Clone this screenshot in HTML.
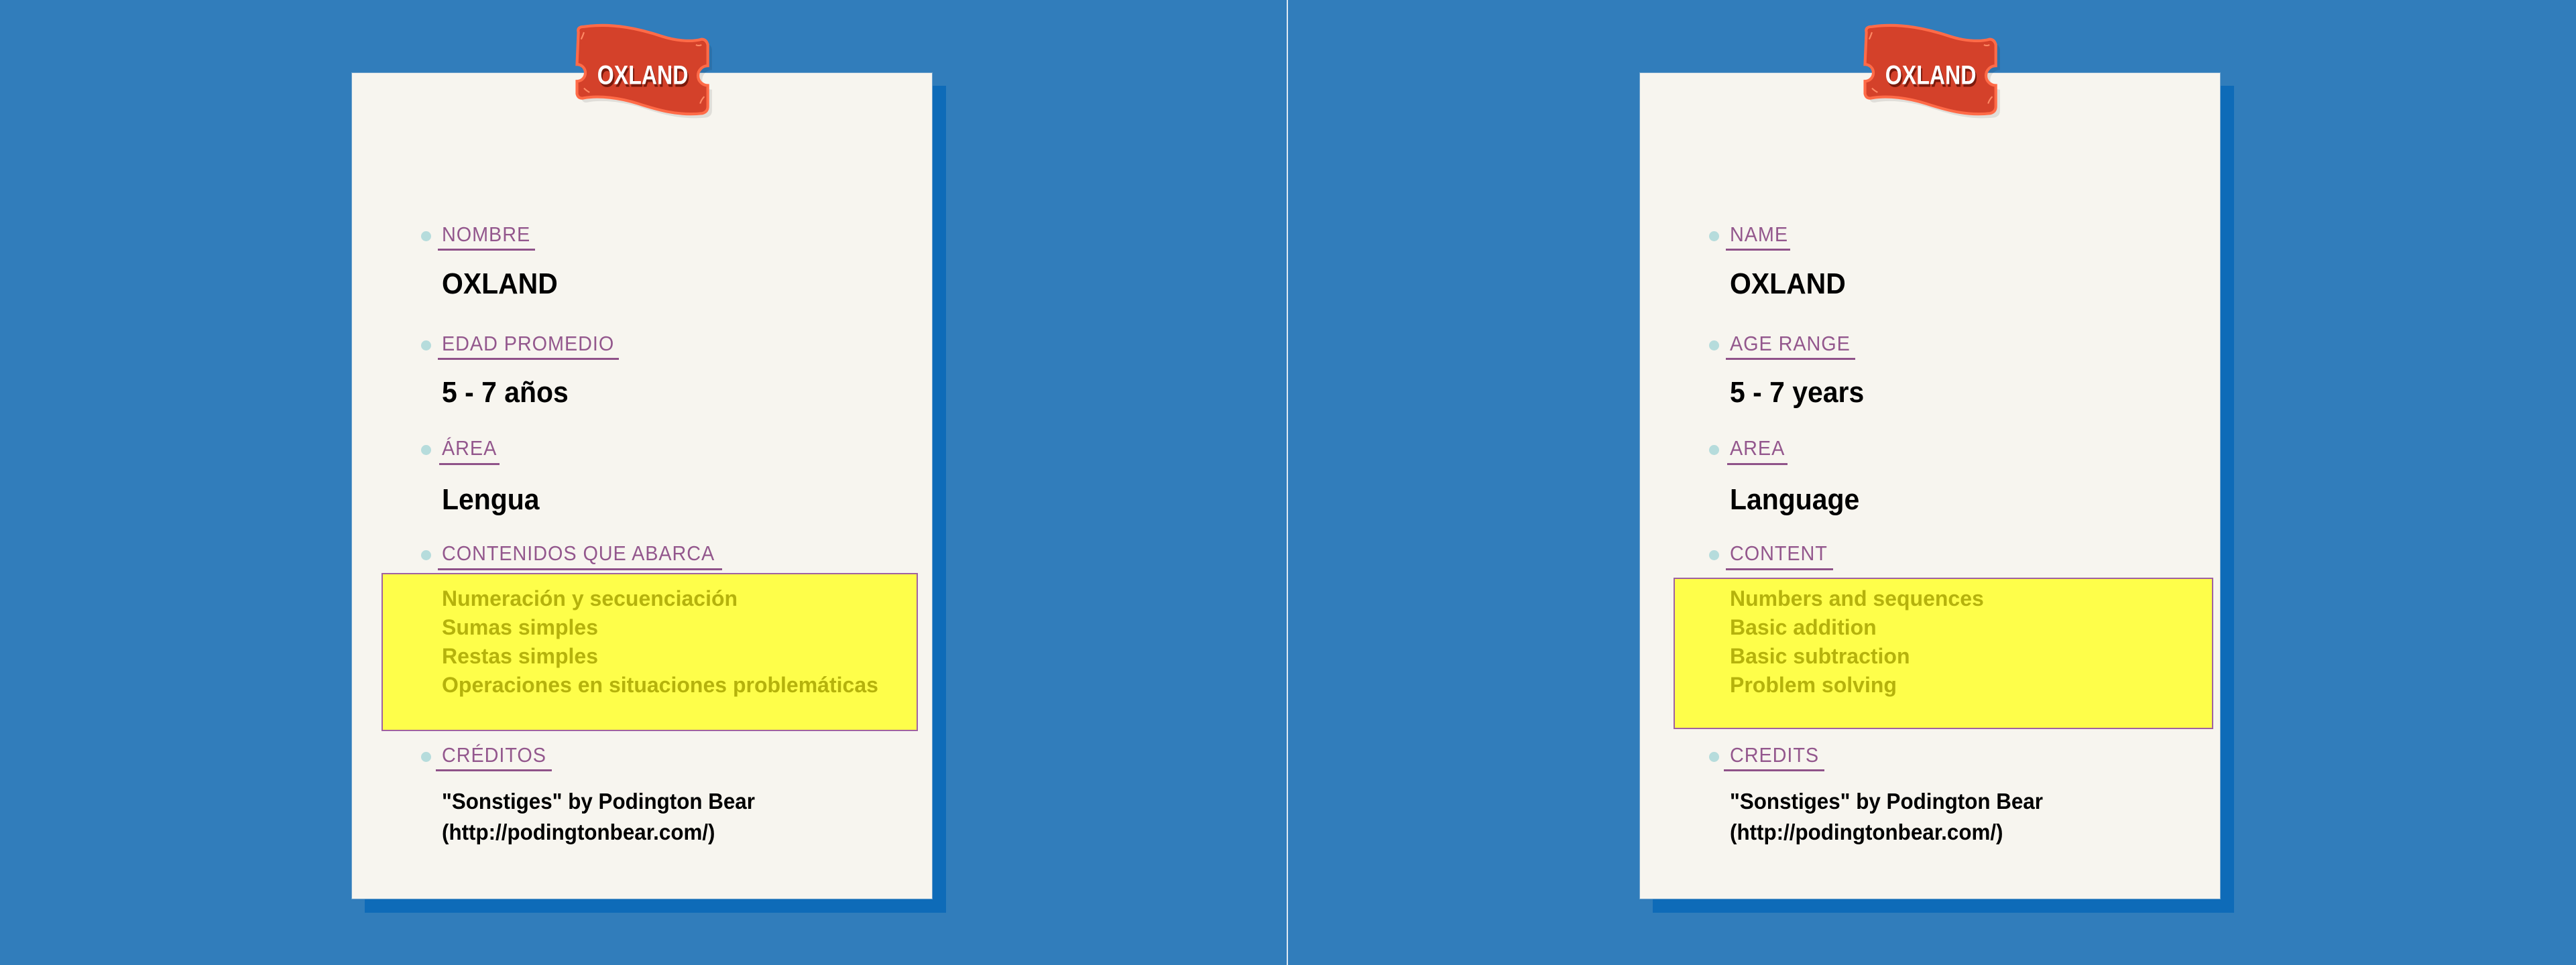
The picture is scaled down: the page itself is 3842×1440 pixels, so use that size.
<!DOCTYPE html>
<html><head><meta charset="utf-8">
<style>
*{margin:0;padding:0;box-sizing:border-box}
body{width:3842px;height:1440px;background:#317dbb;position:relative;overflow:hidden;font-family:"Liberation Sans",sans-serif}
.div{position:absolute;left:1919px;top:0;width:2px;height:1440px;background:#dfe9f2}
.panel{position:absolute;top:0;width:1921px;height:1440px}
.shadow{position:absolute;left:544px;top:128px;width:867px;height:1234px;background:#0e6bb8}
.card{position:absolute;left:524px;top:108px;width:867px;height:1234px;background:#f7f5ef;border:1px solid #6fa2cc}
.t{position:absolute;white-space:nowrap;line-height:1;transform-origin:0 0}
.lab{font-size:31px;color:#93578d;letter-spacing:1px;transform:scaleX(0.93)}
.ul{position:absolute;height:3px;background:#8f5289}
.dot{position:absolute;width:15px;height:15px;border-radius:50%;background:#b6dcdc}
.val{font-size:44px;color:#000;font-weight:bold;transform:scaleX(0.93)}
.box{position:absolute;background:#fefe4a;border:2px solid #a062a0}
.it{font-size:32px;color:#b5b20c;font-weight:bold;transform:scaleX(1.0)}
.cr{font-size:33px;color:#000;font-weight:bold;transform:scaleX(0.95)}
.badge{position:absolute;left:848px;top:32px}
</style></head><body>
<div class="div"></div>

<!-- LEFT -->
<div class="panel" style="left:0">
<div class="shadow"></div><div class="card"></div>
<svg class="badge" width="240" height="170" viewBox="0 0 230 160">
<g transform="translate(6,6)"><path d="M14,14 Q12,6 22,6 C64,0 104,10 134,20 C159,28 180,27 190,24 Q197,24 199,32 L199,62 A12,12 0 0 0 199,90 L199,120 Q199,128 191,130 C155,134 124,124 99,116 C74,108 44,104 22,108 Q14,110 12,102 L12,84 A12,12 0 0 0 12,60 Z" fill="#000" opacity="0.09"/></g>
<path d="M14,14 Q12,6 22,6 C64,0 104,10 134,20 C159,28 180,27 190,24 Q197,24 199,32 L199,62 A12,12 0 0 0 199,90 L199,120 Q199,128 191,130 C155,134 124,124 99,116 C74,108 44,104 22,108 Q14,110 12,102 L12,84 A12,12 0 0 0 12,60 Z" fill="#d4412a" stroke="#ff6b48" stroke-width="4"/>
<path d="M22,14 Q20,20 18,24 M190,32 Q186,34 182,32 M22,94 Q26,98 30,100 M188,116 Q190,110 194,106" stroke="#ff8a66" stroke-width="2" fill="none"/>
<text x="43" y="92" font-family="Liberation Sans" font-weight="bold" font-size="38" fill="#7a1a0c" textLength="130" lengthAdjust="spacingAndGlyphs">OXLAND</text>
<text x="41" y="88" font-family="Liberation Sans" font-weight="bold" font-size="38" fill="#fff" textLength="130" lengthAdjust="spacingAndGlyphs">OXLAND</text>
</svg>

<div class="dot" style="left:628px;top:345px"></div>
<div class="t lab" style="left:659px;top:334px">NOMBRE</div>
<div class="ul" style="left:653px;top:371px;width:145px"></div>
<div class="t val" style="left:659px;top:402px">OXLAND</div>

<div class="dot" style="left:628px;top:508px"></div>
<div class="t lab" style="left:659px;top:497px">EDAD PROMEDIO</div>
<div class="ul" style="left:653px;top:534px;width:270px"></div>
<div class="t val" style="left:659px;top:564px">5 - 7 años</div>

<div class="dot" style="left:628px;top:664px"></div>
<div class="t lab" style="left:659px;top:653px">ÁREA</div>
<div class="ul" style="left:655px;top:691px;width:90px"></div>
<div class="t val" style="left:659px;top:724px">Lengua</div>

<div class="dot" style="left:628px;top:821px"></div>
<div class="t lab" style="left:659px;top:810px">CONTENIDOS QUE ABARCA</div>
<div class="ul" style="left:653px;top:848px;width:424px"></div>

<div class="box" style="left:569px;top:855px;width:800px;height:236px"></div>
<div class="t it" style="left:659px;top:877px">Numeración y secuenciación</div>
<div class="t it" style="left:659px;top:920px">Sumas simples</div>
<div class="t it" style="left:659px;top:963px">Restas simples</div>
<div class="t it" style="left:659px;top:1006px">Operaciones en situaciones problemáticas</div>

<div class="dot" style="left:628px;top:1122px"></div>
<div class="t lab" style="left:659px;top:1111px">CRÉDITOS</div>
<div class="ul" style="left:650px;top:1148px;width:173px"></div>
<div class="t cr" style="left:659px;top:1179px">"Sonstiges" by Podington Bear</div>
<div class="t cr" style="left:659px;top:1225px">(http://podingtonbear.com/)</div>
</div>

<!-- RIGHT -->
<div class="panel" style="left:1921px">
<div class="shadow"></div><div class="card"></div>
<svg class="badge" width="240" height="170" viewBox="0 0 230 160">
<g transform="translate(6,6)"><path d="M14,14 Q12,6 22,6 C64,0 104,10 134,20 C159,28 180,27 190,24 Q197,24 199,32 L199,62 A12,12 0 0 0 199,90 L199,120 Q199,128 191,130 C155,134 124,124 99,116 C74,108 44,104 22,108 Q14,110 12,102 L12,84 A12,12 0 0 0 12,60 Z" fill="#000" opacity="0.09"/></g>
<path d="M14,14 Q12,6 22,6 C64,0 104,10 134,20 C159,28 180,27 190,24 Q197,24 199,32 L199,62 A12,12 0 0 0 199,90 L199,120 Q199,128 191,130 C155,134 124,124 99,116 C74,108 44,104 22,108 Q14,110 12,102 L12,84 A12,12 0 0 0 12,60 Z" fill="#d4412a" stroke="#ff6b48" stroke-width="4"/>
<path d="M22,14 Q20,20 18,24 M190,32 Q186,34 182,32 M22,94 Q26,98 30,100 M188,116 Q190,110 194,106" stroke="#ff8a66" stroke-width="2" fill="none"/>
<text x="43" y="92" font-family="Liberation Sans" font-weight="bold" font-size="38" fill="#7a1a0c" textLength="130" lengthAdjust="spacingAndGlyphs">OXLAND</text>
<text x="41" y="88" font-family="Liberation Sans" font-weight="bold" font-size="38" fill="#fff" textLength="130" lengthAdjust="spacingAndGlyphs">OXLAND</text>
</svg>

<div class="dot" style="left:628px;top:345px"></div>
<div class="t lab" style="left:659px;top:334px">NAME</div>
<div class="ul" style="left:653px;top:371px;width:96px"></div>
<div class="t val" style="left:659px;top:402px">OXLAND</div>

<div class="dot" style="left:628px;top:508px"></div>
<div class="t lab" style="left:659px;top:497px">AGE RANGE</div>
<div class="ul" style="left:653px;top:534px;width:193px"></div>
<div class="t val" style="left:659px;top:564px">5 - 7 years</div>

<div class="dot" style="left:628px;top:664px"></div>
<div class="t lab" style="left:659px;top:653px">AREA</div>
<div class="ul" style="left:655px;top:691px;width:90px"></div>
<div class="t val" style="left:659px;top:724px">Language</div>

<div class="dot" style="left:628px;top:821px"></div>
<div class="t lab" style="left:659px;top:810px">CONTENT</div>
<div class="ul" style="left:653px;top:848px;width:160px"></div>

<div class="box" style="left:575px;top:862px;width:805px;height:226px"></div>
<div class="t it" style="left:659px;top:877px">Numbers and sequences</div>
<div class="t it" style="left:659px;top:920px">Basic addition</div>
<div class="t it" style="left:659px;top:963px">Basic subtraction</div>
<div class="t it" style="left:659px;top:1006px">Problem solving</div>

<div class="dot" style="left:628px;top:1122px"></div>
<div class="t lab" style="left:659px;top:1111px">CREDITS</div>
<div class="ul" style="left:650px;top:1148px;width:150px"></div>
<div class="t cr" style="left:659px;top:1179px">"Sonstiges" by Podington Bear</div>
<div class="t cr" style="left:659px;top:1225px">(http://podingtonbear.com/)</div>
</div>
</body></html>
